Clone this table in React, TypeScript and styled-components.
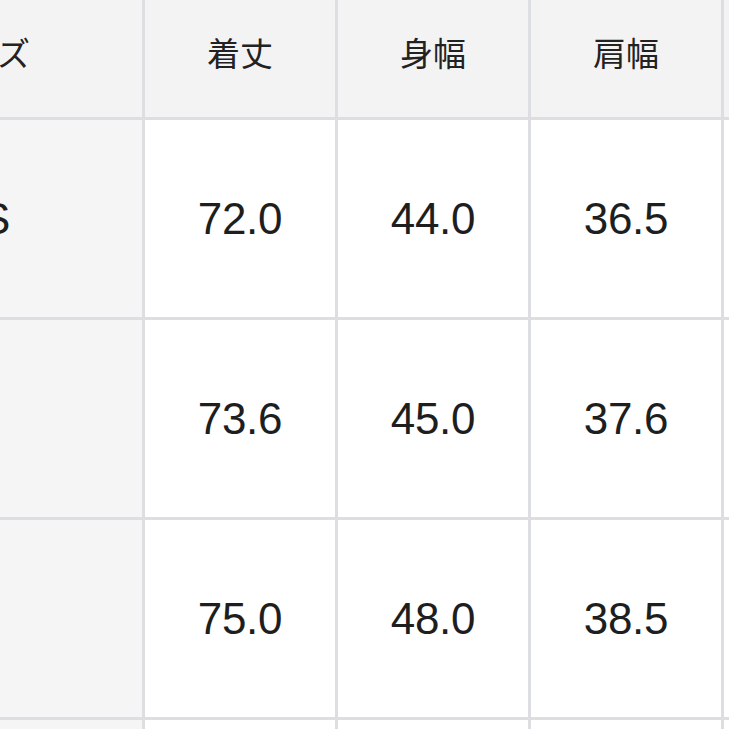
import React from "react";
import styled, { createGlobalStyle } from "styled-components";

const Global = createGlobalStyle`
  html, body {
    margin: 0;
    padding: 0;
    background: #ffffff;
    overflow: hidden;
  }
  body {
    width: 729px;
    height: 729px;
  }
`;

const Viewport = styled.div`
  width: 729px;
  height: 729px;
  overflow: hidden;
  position: relative;
  background: #ffffff;
`;

const Grid = styled.div`
  display: grid;
  grid-template-columns: 300px 190px 190px 190px 190px;
  grid-template-rows: 123px 197px 197px 197px 197px;
  gap: 3px;
  background: #dddee1;
  margin-left: -158px;
  margin-top: -6px;
  width: max-content;
`;

const Cell = styled.div<{ $kind: "head" | "label" | "data"; $pad?: number }>`
  display: flex;
  align-items: center;
  justify-content: ${(p) => (p.$kind === "label" || (p.$kind === "head" && p.$pad) ? "flex-end" : "center")};
  padding-right: ${(p) => (p.$pad ? `${p.$pad}px` : "0")};
  background: ${(p) => (p.$kind === "data" ? "#ffffff" : p.$kind === "head" ? "#f3f3f4" : "#f5f5f6")};
  color: #1e1e1e;
  overflow: hidden;
  white-space: nowrap;
`;

const HeadText = styled.span`
  font-family: "Noto Sans CJK JP", "Noto Sans", sans-serif;
  font-size: 33px;
  font-weight: 400;
  line-height: 1;
  margin-top: -7px;
  color: #222222;
`;

const NumText = styled.span`
  font-family: "Liberation Sans", Arial, sans-serif;
  font-size: 44px;
  font-weight: 400;
  line-height: 1;
  letter-spacing: -0.3px;
`;

const headers = ["着丈", "身幅", "肩幅", ""];
const rows: { label: string; values: string[] }[] = [
  { label: "S", values: ["72.0", "44.0", "36.5", ""] },
  { label: "", values: ["73.6", "45.0", "37.6", ""] },
  { label: "", values: ["75.0", "48.0", "38.5", ""] },
  { label: "", values: ["", "", "", ""] },
];

export default function App() {
  return (
    <>
      <Global />
      <Viewport>
        <Grid>
          <Cell $kind="head" $pad={112}>
            <HeadText>サイズ</HeadText>
          </Cell>
          {headers.map((h, i) => (
            <Cell key={`h${i}`} $kind="head">
              <HeadText>{h}</HeadText>
            </Cell>
          ))}
          {rows.map((r, ri) => (
            <React.Fragment key={`r${ri}`}>
              <Cell $kind="label" $pad={132}>
                <NumText>{r.label}</NumText>
              </Cell>
              {r.values.map((v, vi) => (
                <Cell key={`c${ri}-${vi}`} $kind="data">
                  <NumText>{v}</NumText>
                </Cell>
              ))}
            </React.Fragment>
          ))}
        </Grid>
      </Viewport>
    </>
  );
}
